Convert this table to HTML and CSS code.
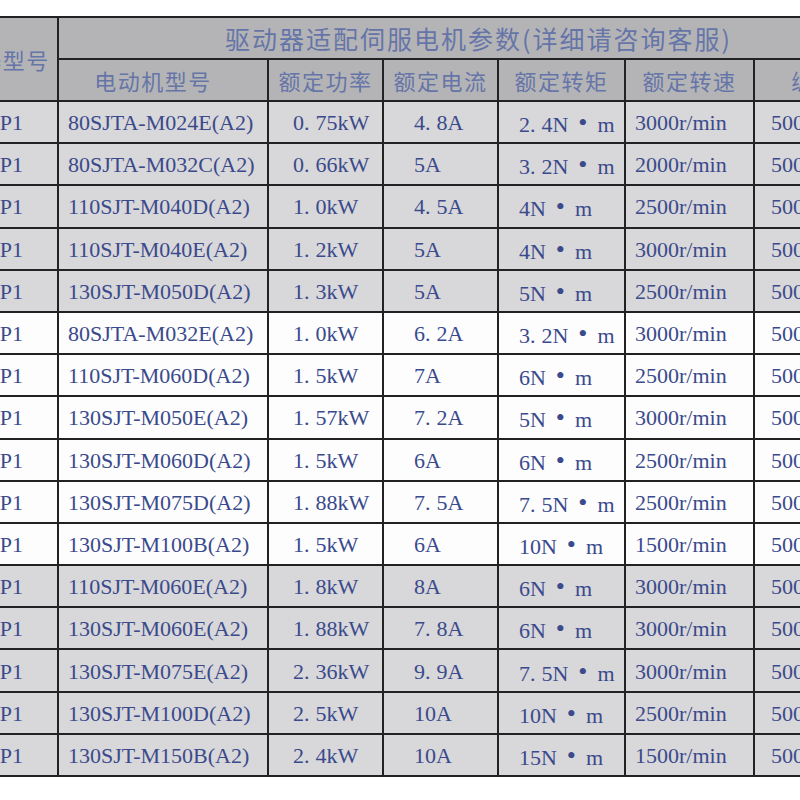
FILE: index.html
```html
<!DOCTYPE html>
<html lang="zh-CN">
<head>
<meta charset="utf-8">
<title>驱动器适配伺服电机参数</title>
<link rel="stylesheet" href="styles.css">
</head>
<body>
<div class="viewport">
  <table class="spec">
    <colgroup>
      <col class="c-drv"><col class="c-model"><col class="c-pow"><col class="c-cur"><col class="c-tq"><col class="c-spd"><col class="c-enc">
    </colgroup>
    <thead>
      <tr>
        <th class="h-drv" rowspan="2">驱动器型号</th>
        <th class="h-title" colspan="6">驱动器适配伺服电机参数(详细请咨询客服)</th>
      </tr>
      <tr>
        <th class="h-model">电动机型号</th>
        <th>额定功率</th>
        <th>额定电流</th>
        <th>额定转矩</th>
        <th>额定转速</th>
        <th>编码器</th>
      </tr>
    </thead>
    <tbody>
      <tr class="g"><td class="drv">P1</td><td class="model">80SJTA-M024E(A2)</td><td class="pow">0<span class="p">.</span>75kW</td><td class="cur">4<span class="p">.</span>8A</td><td class="tq">2<span class="p">.</span>4N<span class="md">•</span>m</td><td class="spd">3000r/min</td><td class="enc">5000</td></tr>
      <tr class="g"><td class="drv">P1</td><td class="model">80SJTA-M032C(A2)</td><td class="pow">0<span class="p">.</span>66kW</td><td class="cur">5A</td><td class="tq">3<span class="p">.</span>2N<span class="md">•</span>m</td><td class="spd">2000r/min</td><td class="enc">5000</td></tr>
      <tr class="g"><td class="drv">P1</td><td class="model">110SJT-M040D(A2)</td><td class="pow">1<span class="p">.</span>0kW</td><td class="cur">4<span class="p">.</span>5A</td><td class="tq">4N<span class="md">•</span>m</td><td class="spd">2500r/min</td><td class="enc">5000</td></tr>
      <tr class="g"><td class="drv">P1</td><td class="model">110SJT-M040E(A2)</td><td class="pow">1<span class="p">.</span>2kW</td><td class="cur">5A</td><td class="tq">4N<span class="md">•</span>m</td><td class="spd">3000r/min</td><td class="enc">5000</td></tr>
      <tr class="g"><td class="drv">P1</td><td class="model">130SJT-M050D(A2)</td><td class="pow">1<span class="p">.</span>3kW</td><td class="cur">5A</td><td class="tq">5N<span class="md">•</span>m</td><td class="spd">2500r/min</td><td class="enc">5000</td></tr>
      <tr class="w"><td class="drv">P1</td><td class="model">80SJTA-M032E(A2)</td><td class="pow">1<span class="p">.</span>0kW</td><td class="cur">6<span class="p">.</span>2A</td><td class="tq">3<span class="p">.</span>2N<span class="md">•</span>m</td><td class="spd">3000r/min</td><td class="enc">5000</td></tr>
      <tr class="w"><td class="drv">P1</td><td class="model">110SJT-M060D(A2)</td><td class="pow">1<span class="p">.</span>5kW</td><td class="cur">7A</td><td class="tq">6N<span class="md">•</span>m</td><td class="spd">2500r/min</td><td class="enc">5000</td></tr>
      <tr class="w"><td class="drv">P1</td><td class="model">130SJT-M050E(A2)</td><td class="pow">1<span class="p">.</span>57kW</td><td class="cur">7<span class="p">.</span>2A</td><td class="tq">5N<span class="md">•</span>m</td><td class="spd">3000r/min</td><td class="enc">5000</td></tr>
      <tr class="w"><td class="drv">P1</td><td class="model">130SJT-M060D(A2)</td><td class="pow">1<span class="p">.</span>5kW</td><td class="cur">6A</td><td class="tq">6N<span class="md">•</span>m</td><td class="spd">2500r/min</td><td class="enc">5000</td></tr>
      <tr class="w"><td class="drv">P1</td><td class="model">130SJT-M075D(A2)</td><td class="pow">1<span class="p">.</span>88kW</td><td class="cur">7<span class="p">.</span>5A</td><td class="tq">7<span class="p">.</span>5N<span class="md">•</span>m</td><td class="spd">2500r/min</td><td class="enc">5000</td></tr>
      <tr class="w"><td class="drv">P1</td><td class="model">130SJT-M100B(A2)</td><td class="pow">1<span class="p">.</span>5kW</td><td class="cur">6A</td><td class="tq">10N<span class="md">•</span>m</td><td class="spd">1500r/min</td><td class="enc">5000</td></tr>
      <tr class="g"><td class="drv">P1</td><td class="model">110SJT-M060E(A2)</td><td class="pow">1<span class="p">.</span>8kW</td><td class="cur">8A</td><td class="tq">6N<span class="md">•</span>m</td><td class="spd">3000r/min</td><td class="enc">5000</td></tr>
      <tr class="g"><td class="drv">P1</td><td class="model">130SJT-M060E(A2)</td><td class="pow">1<span class="p">.</span>88kW</td><td class="cur">7<span class="p">.</span>8A</td><td class="tq">6N<span class="md">•</span>m</td><td class="spd">3000r/min</td><td class="enc">5000</td></tr>
      <tr class="g"><td class="drv">P1</td><td class="model">130SJT-M075E(A2)</td><td class="pow">2<span class="p">.</span>36kW</td><td class="cur">9<span class="p">.</span>9A</td><td class="tq">7<span class="p">.</span>5N<span class="md">•</span>m</td><td class="spd">3000r/min</td><td class="enc">5000</td></tr>
      <tr class="g"><td class="drv">P1</td><td class="model">130SJT-M100D(A2)</td><td class="pow">2<span class="p">.</span>5kW</td><td class="cur">10A</td><td class="tq">10N<span class="md">•</span>m</td><td class="spd">2500r/min</td><td class="enc">5000</td></tr>
      <tr class="g"><td class="drv">P1</td><td class="model">130SJT-M150B(A2)</td><td class="pow">2<span class="p">.</span>4kW</td><td class="cur">10A</td><td class="tq">15N<span class="md">•</span>m</td><td class="spd">1500r/min</td><td class="enc">5000</td></tr>
    </tbody>
  </table>
</div>
</body>
</html>
```

FILE: styles.css
```css
html, body {
  margin: 0;
  padding: 0;
  background: #ffffff;
  overflow: hidden;
}

.viewport {
  width: 800px;
  height: 800px;
  overflow: hidden;
  padding-top: 16px;
  box-sizing: border-box;
}

.spec {
  border-collapse: collapse;
  table-layout: fixed;
  width: 975px;
  margin-left: -77px;
  font-family: "Liberation Serif", "Noto Sans CJK SC", serif;
  color: #3a4a8c;
}

.c-drv { width: 134px; }
.c-model { width: 210px; }
.c-pow { width: 115px; }
.c-cur { width: 115px; }
.c-tq { width: 127px; }
.c-spd { width: 129px; }
.c-enc { width: 145px; }

.spec th,
.spec td {
  border: 2px solid #222222;
  padding: 0;
  height: 42px;
  box-sizing: border-box;
  white-space: nowrap;
  overflow: hidden;
  vertical-align: middle;
}

.spec tbody td {
  height: 42.2px;
}

.spec th {
  background: #b4b4b6;
  font-family: "Noto Sans CJK SC", sans-serif;
  font-weight: 400;
  font-size: 22px;
  letter-spacing: 1.5px;
  color: #6675a8;
  text-align: center;
  line-height: 1;
}

.spec th.h-title {
  font-size: 25px;
  letter-spacing: 2px;
}

.spec th.h-model {
  padding-right: 20px;
}

.spec td {
  font-size: 22px;
  line-height: 1;
  text-align: left;
  padding-top: 2px;
}

tr.g td { background: #d8d7d9; }
tr.w td { background: #fdfdfd; }

.spec td.drv { text-align: right; padding-right: 34px; }
.spec td.model { padding-left: 9px; }
.spec td.pow { padding-left: 24px; }
.spec td.cur { padding-left: 30px; }
.spec td.tq { padding-left: 20px; }
.spec td.spd { padding-left: 9px; }
.spec td.enc { padding-left: 16px; }

.p { padding-right: 6px; }

.md {
  display: inline-block;
  width: 29px;
  text-align: center;
  font-size: 26px;
  vertical-align: 1px;
}
```
